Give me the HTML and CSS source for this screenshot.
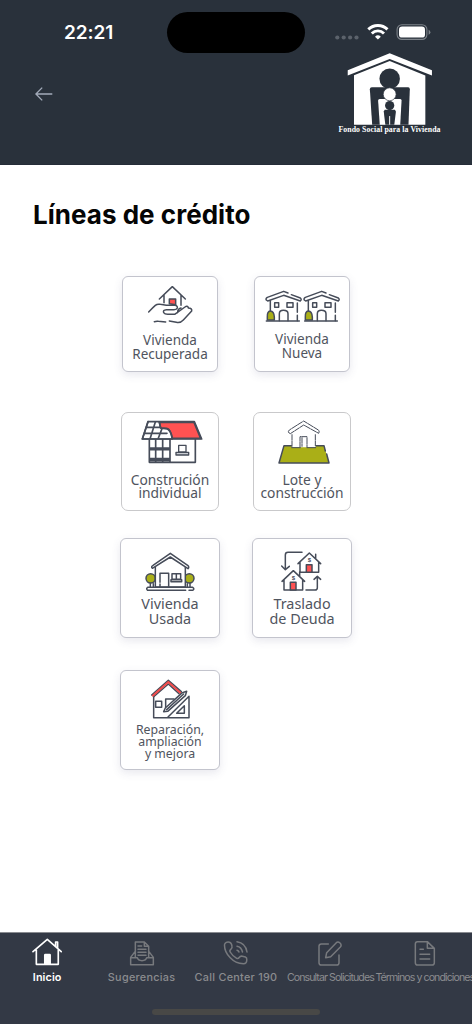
FILE: index.html
```html
<!DOCTYPE html>
<html lang="es">
<head>
<meta charset="utf-8">
<title>Líneas de crédito</title>
<link rel="stylesheet" href="styles.css">
</head>
<body>
<div class="app">
  <header class="header">
    <div class="status">
      <span class="time">22:21</span>
      <span class="island"></span>
      <svg class="status-icons" viewBox="0 0 98 20">
        <g fill="#5b626b"><circle cx="2.3" cy="14.5" r="2.1"/><circle cx="8.7" cy="14.5" r="2.1"/><circle cx="15.1" cy="14.5" r="2.1"/><circle cx="21.5" cy="14.5" r="2.1"/></g>
        <g fill="none" stroke="#fff" stroke-width="2.9"><path d="M33.3 6.4a13.6 13.6 0 0 1 19.2 0"/><path d="M36.8 10.4a8.6 8.6 0 0 1 12.2 0"/></g>
        <path fill="#fff" d="M42.9 16.6l-2.9-2.9a4.2 4.2 0 0 1 5.800 0z"/>
        <rect x="62.1" y="1.8" width="29.8" height="14.6" rx="4.8" fill="none" stroke="#7c8289" stroke-width="1.1"/>
        <rect x="64" y="3.6" width="26" height="11" rx="3.2" fill="#fff"/>
        <path d="M93.6 6.700q1.8.8 1.8 2.5t-1.8 2.5z" fill="#7c8289"/>
      </svg>
    </div>
    <div class="toolbar">
      <svg class="back" viewBox="0 0 18 16"><path d="M17.3 8H1M7.2 1.6L.9 8l6.3 6.4" fill="none" stroke="#a3abba" stroke-width="1.35"/></svg>
      <div class="brand">
        <svg class="brand-mark" viewBox="80 127 258 218">
          <path fill="#fff" d="M208 128L336 179V195L208 145 81 195V179z"/>
          <path fill="#fff" d="M208 151L316 195V344H100V194z"/>
          <g fill="#29313b"><circle cx="208" cy="205" r="31"/><path d="M154 231H264Q269 231 269 237L265 344H155L148 237Q148 231 154 231z"/></g>
          <path fill="#fff" d="M178 266H240Q244 266 244 271L240 344H178L173 271Q173 266 178 266z"/>
          <circle cx="208" cy="252" r="19.5" fill="#fff" stroke="#29313b" stroke-width="2"/>
          <g fill="#29313b"><circle cx="208" cy="286" r="14"/><path d="M193 299H224L227 304 222 344H195L190 304z"/></g>
          <path d="M208 318v26" stroke="#fff" stroke-width="3"/>
        </svg>
        <span class="brand-name">Fondo Social para la Vivienda</span>
      </div>
    </div>
  </header>

  <main class="content">
    <h1 class="title">Líneas de crédito</h1>
    <div class="grid">
      <a class="card card-s shadow">
        <svg viewBox="39 36 282 168" height="56"><g class="ln">
          <path d="M148 102L187 65 226 102M162 91V113M213 91V121"/>
          <path fill="#ff5252" d="M178 102H197V119L178 116z"/>
          <path d="M116 141Q129 127 136 121 142 116 151 118L169 121H195Q203 122 202 129 200 134 192 134H169Q158 135 161 143 164 148 173 148H194L225 126Q232 121 235 128M203 143Q202 132 213 129M235 129Q247 130 245 138L220 165Q211 175 199 172L178 168M133 170Q140 168 145 169L167 171"/>
        </g></svg>
        <span class="label">Vivienda<br>Recuperada</span>
      </a>
      <a class="card card-s shadow">
        <svg viewBox="39 36 282 165" height="55"><g class="ln">
          <g id="casa"><path d="M73 105Q70 101 76 97L125 79 138 84M148 89L175 99Q180 104 175 108L125 91 77 108 73 105M85 108V138M166 114V142M166 151V167M98 113H110V127H98zM135 113H153V127H135zM112 167V146Q112 136 124 136 138 136 138 146V167"/><path d="M76 165V156Q75 139 85 138 96 139 97 156V165z" fill="#aaaf17"/></g>
          <use href="#casa" x="114"/><path d="M73 168H172M188 168H286"/>
        </g></svg>
        <span class="label">Vivienda<br>Nueva</span>
      </a>
      <a class="card card-m">
        <svg viewBox="36 39 288 180" height="60"><g class="ln bold">
          <path d="M114 65H253L275 117H97z" fill="#fff"/><path d="M148 67H252L272 115H187Q182 89 171 86L152 84z" fill="#ff5252"/>
          <path d="M114 65L97 117H187Q182 89 171 86L152 84 148 66M118 118V187H256V118M180 118V187M118 144H180M118 149H180M118 176H180M118 181H180M137 118V187M158 118V187M136 66L120 117M156 86L144 117M110 82H151M103 100H171"/><path d="M198 157H236V165H198z" fill="#c9ccd2" stroke-width="4"/><path d="M206 156V136H228V156z" fill="#fff" stroke-width="4"/>
        </g></svg>
        <span class="label">Construción<br>individual</span>
      </a>
      <a class="card card-m">
        <svg viewBox="36 39 288 180" height="60"><g class="ln thin">
          <path d="M126 137H246L261 189H111z" fill="#aaaf17" stroke="none"/>
          <path d="M149 142V96L185 77 221 96V142z" fill="#fff" stroke="none"/>
          <path d="M148 137H126L111 189H261L254 162M250 153L246 137H222" stroke-width="4.500"/>
          <path stroke-dasharray="16 3" d="M140 98Q137 94 142 90L185 63 229 90Q234 94 230 100L185 75 145 101 140 98M150 104V141M220 104V137M174 141V110H195V141M180 113V139"/>
          <path d="M149 143H175M195 143H221"/>
        </g></svg>
        <span class="label">Lote y<br>construcción</span>
      </a>
      <a class="card card-l shadow">
        <svg viewBox="33 33 294 171" height="57"><g class="ln">
          <g fill="#aaaf17"><circle cx="122" cy="151" r="14"/><circle cx="238" cy="151" r="14"/></g>
          <path d="M136 177V113L181 85 226 113V177z" fill="#fff"/>
          <path d="M127 121Q122 116 129 112L181 76 233 112Q239 117 234 122L181 87z" fill="#fff"/>
          <path d="M121 166V177M130 167V177M240 166V177M232 167V177M150 163V136H176V177M150 168V177M186 137H212V154H186zM199 137V153M183 155H215V161H183zM227 187H113Q107 182 113 178H248Q255 183 248 187H237"/>
        </g></svg>
        <span class="label">Vivienda<br>Usada</span>
      </a>
      <a class="card card-l shadow">
        <svg viewBox="33 33 294 171" height="57"><g class="ln">
          <path d="M180 73H138Q130 73 130 81V124M119 114L130 125 142 115M192 186H219Q226 186 226 179V147M216 154L226 145 236 154"/>
          <g id="deuda"><path d="M168 107L202 75 236 107M174 102V133H230V102M221 92V79"/><path d="M193 133V110H210V133z" fill="#ff5252"/><text class="coin" x="202" y="103">$</text></g>
          <use href="#deuda" x="-48" y="53"/>
        </g></svg>
        <span class="label">Traslado<br>de Deuda</span>
      </a>
      <a class="card card-l card-three shadow">
        <svg viewBox="33 33 294 159" height="53"><g class="ln">
          <path d="M131 106V173H237V109L174 171M137 124H155V142H137zM167 143V117H192M223 137L200 160H223z"/>
          <path d="M125 105L175 61 214 95M132 109L175 72 207 101"/>
          <path d="M128.500 107L175 66 211 98" stroke="#f24b4b" stroke-width="6"/>
          <path d="M161 155L166 144 217 98 230 94 226 107 173 154z" fill="#fff"/>
          <path d="M170 149L221 102"/>
        </g></svg>
        <span class="label">Reparación,<br>ampliación<br>y mejora</span>
      </a>
    </div>
  </main>

  <nav class="tabs">
    <a class="tab active">
      <svg viewBox="96 39 92 84" width="30.600" height="28"><g fill="none" stroke="#fff" stroke-width="5" stroke-linejoin="round" stroke-linecap="round"><path d="M99 80L142 43 184 80M109 74V118H175V74M167 63V51H173V68"/></g><path fill="#fff" d="M132 118V90Q132 86 136 86H149Q153 86 153 90V118z"/></svg>
      <span>Inicio</span>
    </a>
    <a class="tab">
      <svg viewBox="386 45 78 78" width="26" height="26"><g class="tabln"><path d="M404 80L391 97V119H459V97L446 80M391 98H411Q413 107 425 107 437 107 439 98H459M405 97V51H432L445 64V97M432 51V64H445M413 63H424M413 73H437M413 82H437M413 91H437"/></g></svg>
      <span>Sugerencias</span>
    </a>
    <a class="tab">
      <svg viewBox="0 0 26 26" width="26" height="26"><g class="tabln call"><path d="M2 3.500Q3.500 1.500 6.500 2.200 8.500 2.800 9 6.200 9.400 8.200 8 9.200 6.200 10.600 7.200 12 9.500 16 13.700 18.400 15.200 19 16.200 17.500 17.300 15.800 19.300 16.200L22.400 17Q24 17.600 23.800 19.700 23.800 23.700 20.500 23.800 12.500 23.500 7 17.500 1.500 11.800 1.500 5.200 1.500 4 2 3.500zM14 6.200Q18.500 7 19.500 12M14 1.800Q22.500 3 24 12M14 10.200Q15.500 10.500 16 12"/></g></svg>
      <span>Call Center 190</span>
    </a>
    <a class="tab tight">
      <svg viewBox="242 45 78 78" width="26" height="26"><g class="tabln"><path d="M276 57H255Q248 57 248 64V113Q248 120 255 120H301Q308 120 308 113V90M268 98L271 83 300 53Q305 49 311 54 317 60 312 66L283 95z"/></g></svg>
      <span>Consultar Solicitudes</span>
    </a>
    <a class="tab tight">
      <svg viewBox="527 45 78 78" width="26" height="26"><g class="tabln"><path d="M543 50H573L594 70V113Q594 120 587 120H544Q537 120 537 113V57Q537 50 543 50M573 50V70H594M551 73H561M551 88H580M551 102H580"/></g></svg>
      <span>Términos y condiciones</span>
    </a>
  </nav>
  <div class="home"><span class="home-bar"></span></div>
</div>
</body>
</html>
```
FILE: styles.css
```css
* { box-sizing: border-box; }
body { margin: 0; font-family: Inter, "Liberation Sans", sans-serif; background: #fff; }
.app { width: 472px; height: 1024px; display: flex; flex-direction: column; overflow: hidden; }
svg { display: block; flex: none; }

.header { height: 165px; flex: none; background: #29313b; border-bottom: 1px solid #252c38; }
.status { display: flex; height: 53px; padding: 12px 39px 0 64px; }
.time { width: 103px; margin-top: 8px; font-size: 19px; line-height: 25px; font-weight: 600; color: #fff; letter-spacing: -0.1px; }
.island { width: 138px; height: 41px; border-radius: 21px; background: #000; }
.status-icons { width: 98px; height: 20px; margin: 11px 0 0 30px; }
.toolbar { display: flex; justify-content: space-between; padding: 0 31px 0 35px; }
.back { width: 18px; height: 16px; margin-top: 33px; }
.brand { display: flex; flex-direction: column; align-items: center; width: 103px; }
.brand-mark { width: 86px; height: 72px; }
.brand-name { font: bold 7.8px/9px "Liberation Serif", serif; color: #fff; white-space: nowrap; letter-spacing: 0.07px; }

.content { flex: 1; }
.title { margin: 32px 0 0 33px; font-size: 26px; line-height: 36px; font-weight: 700; letter-spacing: 0.03px; color: #050505; }
.grid { display: grid; grid-template-columns: 100px 100px; grid-template-rows: 136px 126px 132px 100px; column-gap: 32px; justify-items: center; width: 232px; margin: 43px 0 0 120px; }
.card { display: flex; flex-direction: column; align-items: center; border: 1px solid #c3c4cd; border-radius: 6px; background: #fff; color: #50545e; font-family: "Noto Sans", sans-serif; }
.shadow { box-shadow: 0 3px 9px rgba(75, 80, 120, 0.13); }
.card-s { width: 96px; height: 96px; font-size: 13.5px; line-height: 14.2px; }
.card-m { width: 98px; height: 99px; border-color: #c9c9cb; border-radius: 7px; font-size: 13.8px; line-height: 13px; }
.card-l { width: 100px; height: 100px; font-size: 14.4px; line-height: 15px; }
.card-three { font-size: 12.3px; line-height: 12.2px; }
.card svg { width: 100%; }
.label { text-align: center; white-space: nowrap; }
.ln { fill: none; stroke: #464c59; stroke-width: 4.5; stroke-linejoin: round; stroke-linecap: round; }
.bold { stroke-width: 5; }
.thin { stroke-width: 3; }
.coin { font: bold 18px "Liberation Sans", sans-serif; fill: #464c59; stroke: none; text-anchor: middle; }

.tabs { display: grid; grid-template-columns: repeat(5, 94.4px); height: 68px; background: #333945; border-top: 1px solid #898b90; }
.tab { display: flex; flex-direction: column; align-items: center; justify-content: flex-end; height: 52px; color: #8b8c8f; font-size: 10.8px; font-weight: 500; line-height: 14px; letter-spacing: 0.3px; white-space: nowrap; }
.tab span { margin-top: 5px; }
.tab.active { color: #fff; font-weight: 600; letter-spacing: 0.1px; }
.tab.tight { font-weight: 400; font-size: 10.6px; letter-spacing: -0.92px; }
.tabln { fill: none; stroke: #77797d; stroke-width: 4.5; stroke-linejoin: round; stroke-linecap: round; }
.call { stroke-width: 1.5; }
.home { display: flex; justify-content: center; height: 24px; padding-top: 9px; background: #333945; }
.home-bar { width: 168px; height: 6px; border-radius: 3px; background: #484846; }
```
